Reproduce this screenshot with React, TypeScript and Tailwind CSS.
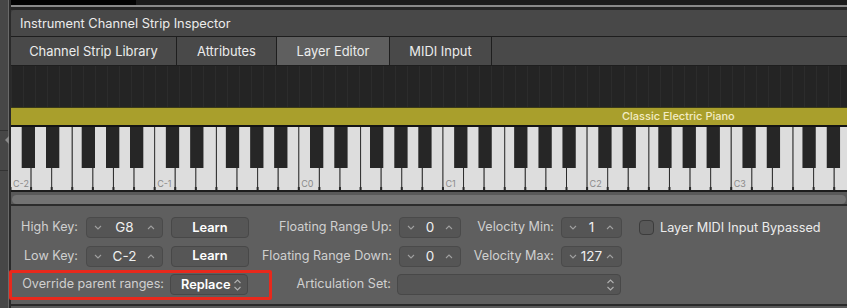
import React from "react";

const OCT = 144.15;
const WK = OCT / 7;
const ORIGIN = -1;
const BLACK = [11.7, 36, 71.7, 96, 120];

function Keyboard() {
  const whites: React.ReactNode[] = [];
  const blacks: React.ReactNode[] = [];
  const labels: React.ReactNode[] = [];
  for (let i = 0; i < 42; i++) {
    const x = ORIGIN + i * WK;
    whites.push(
      <rect key={"w" + i} x={x} y={0} width={WK} height={63} fill="#dddddd" />
    );
    whites.push(
      <line key={"l" + i} x1={x + 0.5} y1={0} x2={x + 0.5} y2={63} stroke="#2a2a2a" strokeWidth={1} />
    );
    whites.push(
      <rect key={"t" + i} x={x - 0.5} y={60} width={2} height={3} fill="#2a2a2a" />
    );
  }
  for (let o = 0; o < 6; o++) {
    const base = ORIGIN + o * OCT;
    BLACK.forEach((b, j) => {
      blacks.push(
        <rect key={"b" + o + j} x={base + b} y={0} width={13.3} height={41} fill="#262626" />
      );
    });
    labels.push(
      <text
        key={"c" + o}
        x={base + 3}
        y={60}
        fontSize={9}
        fill="#8a8a8a"
        fontFamily="Inter, 'Liberation Sans', sans-serif"
      >
        {"C" + (o - 2)}
      </text>
    );
  }
  return (
    <svg width={836} height={65} className="block">
      <rect x={0} y={0} width={836} height={65} fill="#1a1a1a" />
      {whites}
      {blacks}
      {labels}
      <rect x={0} y={63} width={836} height={2} fill="#1c1c1c" />
    </svg>
  );
}

function Chev({ up }: { up?: boolean }) {
  return (
    <svg width={8} height={5} viewBox="0 0 8 5" className="block">
      <polyline
        points={up ? "1,4 4,1 7,4" : "1,1 4,4 7,1"}
        fill="none"
        stroke="#a0a0a0"
        strokeWidth={1.1}
      />
    </svg>
  );
}

function UpDown() {
  return (
    <svg width={9} height={14} viewBox="0 0 9 14" className="block">
      <polyline points="1.5,5 4.5,2 7.5,5" fill="none" stroke="#b0b0b0" strokeWidth={1.1} />
      <polyline points="1.5,9 4.5,12 7.5,9" fill="none" stroke="#b0b0b0" strokeWidth={1.1} />
    </svg>
  );
}

function Stepper({ value, w }: { value: string; w: string }) {
  return (
    <div
      className={`${w} h-[21px] rounded-[4px] bg-[#555555] border border-[#4a4a4a] flex items-center justify-between px-[7px] shrink-0`}
    >
      <Chev />
      <span className="text-[#efefef] text-[13.5px]">{value}</span>
      <Chev up />
    </div>
  );
}

function Label({ text, w }: { text: string; w: string }) {
  return <div className={`${w} text-right text-[#d0d0d0] text-[12.6px] leading-none shrink-0`}>{text}</div>;
}

function Btn({ children }: { children: React.ReactNode }) {
  return (
    <div className="w-[78px] h-[21px] shrink-0 rounded-[4px] bg-[#565656] border border-[#484848] flex items-center justify-center text-white text-[12.8px] font-semibold">
      {children}
    </div>
  );
}

export default function App() {
  return (
    <div
      className="w-[847px] h-[308px] bg-[#3c3c3c] flex overflow-hidden relative"
      style={{ fontFamily: "Inter, 'Liberation Sans', sans-serif" }}
    >
      {/* left sidebar */}
      <div className="w-[11px] h-full flex shrink-0">
        <div className="w-[8px] h-full bg-[#474747] relative">
          <div className="absolute left-0 right-0 top-[130px] h-px bg-[#333]" />
          <div className="absolute left-0 right-0 top-[170px] h-px bg-[#333]" />
          <div className="absolute left-[5px] top-[136px] w-0 h-0 border-y-[4px] border-y-transparent border-r-[4px] border-r-[#8a8a8a]" />
        </div>
        <div className="w-px h-full bg-[#6a6a6a]" />
        <div className="w-[2px] h-full bg-[#2a2a2a]" />
      </div>

      {/* main */}
      <div className="flex-1 flex flex-col min-w-0">
        {/* top strip */}
        <div className="h-[5px] flex">
          <div className="w-[125px] bg-[#030303]" />
          <div className="flex-1 bg-[#1c1c1c]" />
        </div>
        <div className="h-[2px] bg-[#8a8a8a]" />
        <div className="h-[3px] bg-[#262626]" />

        {/* title */}
        <div className="h-[27px] bg-[#484848] border-b border-[#1e1e1e] flex items-center pl-[9px] pt-[2px] rounded-tl-[4px]">
          <span className="text-[#ececec] text-[12.8px]">Instrument Channel Strip Inspector</span>
        </div>

        {/* tabs */}
        <div className="h-[29px] bg-[#494949] flex border-b border-[#1e1e1e] text-[#ececec] text-[12.9px]">
          <div className="w-[166px] flex items-center justify-center pt-[2px] border-r border-[#1e1e1e]">
            Channel Strip Library
          </div>
          <div className="w-[100px] flex items-center justify-center pt-[2px] border-r border-[#1e1e1e]">
            Attributes
          </div>
          <div className="w-[113px] flex items-center justify-center pt-[2px] border-r border-[#1e1e1e] bg-[#5f5f5f]">
            Layer Editor
          </div>
          <div className="w-[102px] flex items-center justify-center pt-[2px] border-r border-[#1e1e1e]">
            MIDI Input
          </div>
          <div className="flex-1" />
        </div>

        {/* piano roll dark area */}
        <div className="h-[41px] bg-[#242424] bg-[repeating-linear-gradient(90deg,#2c2c2c_0px,#2c2c2c_1px,transparent_1px,transparent_12.01px)]" />

        {/* layer bar */}
        <div className="h-[18px] bg-[#a99f2c] border-t border-[#3a3a1a] relative">
          <span className="absolute left-[611px] top-[2px] text-[11px] font-medium text-[#f3ecc4] leading-[13px]">
            Classic Electric Piano
          </span>
        </div>
        <div className="h-[2px] bg-[#141414]" />

        {/* keyboard */}
        <Keyboard />

        {/* scrollbar */}
        <div className="h-[12px] bg-[#595959] flex items-center px-[1px]">
          <div className="h-[9px] w-full rounded-full bg-[#737373] mt-[3px]" />
        </div>
        <div className="h-[2px] bg-[#2c2c2c]" />

        {/* controls panel */}
        <div className="flex-1 bg-[#5f5f5f] flex flex-col gap-[7.5px] pt-[11px] relative">
          {/* row 1 */}
          <div className="flex items-center h-[21px]">
            <Label text="High Key:" w="w-[67px]" />
            <div className="w-[8px] shrink-0" />
            <Stepper value="G8" w="w-[77px]" />
            <div className="w-[8px] shrink-0" />
            <Btn>Learn</Btn>
            <Label text="Floating Range Up:" w="w-[143px]" />
            <div className="w-[7px] shrink-0" />
            <Stepper value="0" w="w-[62px]" />
            <Label text="Velocity Min:" w="w-[93px]" />
            <div className="w-[7px] shrink-0" />
            <Stepper value="1" w="w-[61px]" />
            <div className="w-[17px] shrink-0" />
            <div className="w-[15px] h-[15px] shrink-0 rounded-[4px] bg-[#585858] border border-[#3c3c3c]" />
            <div className="w-[6px] shrink-0" />
            <span className="text-[#ececec] text-[12.7px] whitespace-nowrap">Layer MIDI Input Bypassed</span>
          </div>
          {/* row 2 */}
          <div className="flex items-center h-[21px]">
            <Label text="Low Key:" w="w-[67px]" />
            <div className="w-[8px] shrink-0" />
            <Stepper value="C-2" w="w-[77px]" />
            <div className="w-[8px] shrink-0" />
            <Btn>Learn</Btn>
            <Label text="Floating Range Down:" w="w-[143px]" />
            <div className="w-[7px] shrink-0" />
            <Stepper value="0" w="w-[62px]" />
            <Label text="Velocity Max:" w="w-[93px]" />
            <div className="w-[7px] shrink-0" />
            <Stepper value="127" w="w-[61px]" />
          </div>
          {/* row 3 */}
          <div className="flex items-center h-[21px]">
            <Label text="Override parent ranges:" w="w-[153px]" />
            <div className="w-[6px] shrink-0" />
            <div className="w-[78px] h-[21px] shrink-0 rounded-[4px] bg-[#565656] border border-[#484848] flex items-center justify-between pl-[10px] pr-[5px]">
              <span className="text-white text-[12.8px] font-semibold">Replace</span>
              <UpDown />
            </div>
            <Label text="Articulation Set:" w="w-[143px]" />
            <div className="w-[6px] shrink-0" />
            <div className="w-[224px] h-[21px] shrink-0 rounded-[4px] bg-[#555555] border border-[#484848] flex items-center justify-end pr-[5px]">
              <UpDown />
            </div>
          </div>

          {/* red annotation */}
          <div className="absolute left-[-2px] top-[64px] w-[263px] h-[30px] border-[3px] border-[#e8291c] rounded-[2px]" />
        </div>
        <div className="h-[2px] bg-[#2a2a2a]" />
        <div className="h-[2px] bg-[#5a5a5a]" />
      </div>
    </div>
  );
}
